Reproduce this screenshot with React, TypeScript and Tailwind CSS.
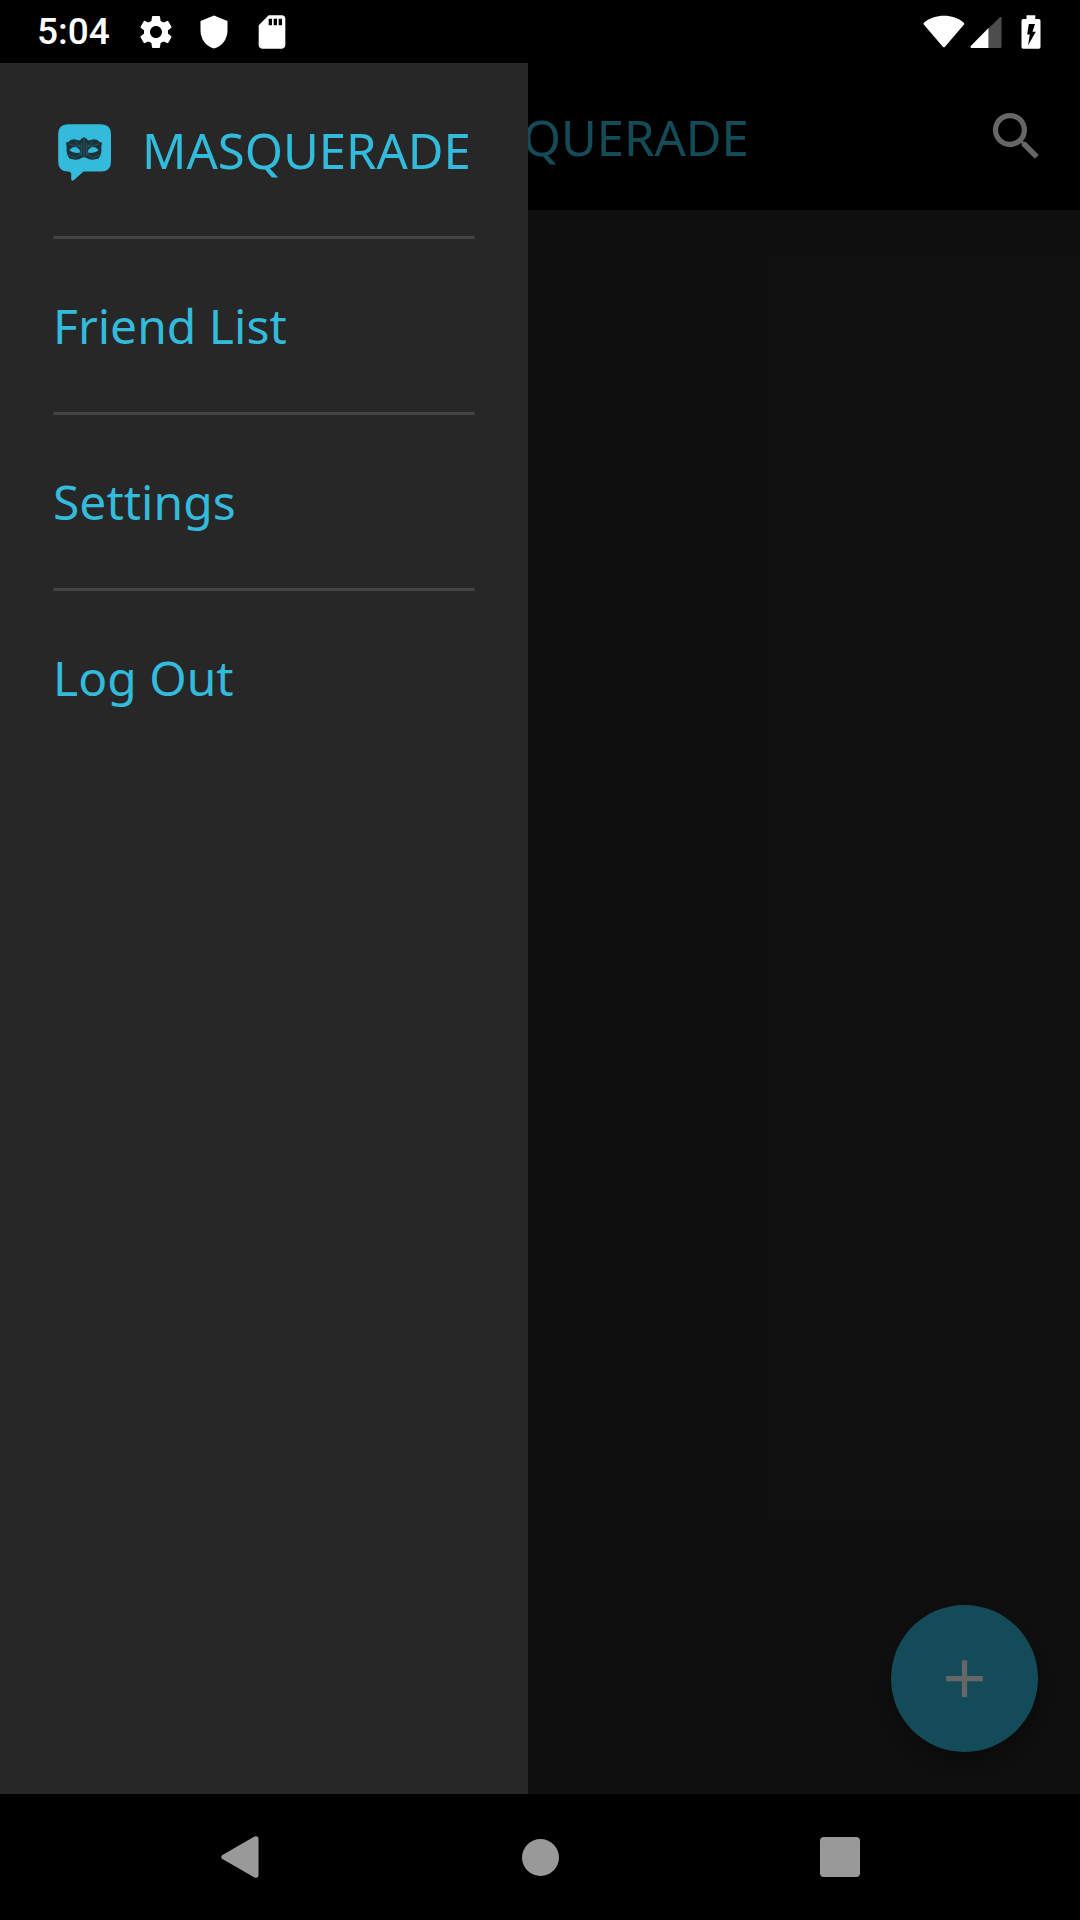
import type { ReactNode } from 'react';
import { MdAdd, MdSdCard, MdSearch, MdSettings } from 'react-icons/md';

const MENU_ITEMS = ['Friend List', 'Settings', 'Log Out'];

function ShieldIcon() {
  return (
    <svg viewBox="0 0 28 34" className="h-[34px] w-8" fill="currentColor" aria-hidden="true">
      <path d="M14 0.5 L27.5 6 V15.5 C27.5 24 22 31.500 14 33.500 C6 31.500 0.500 24 0.500 15.500 V6 Z" />
    </svg>
  );
}

function WifiIcon() {
  return (
    <svg viewBox="0 0 42 34" className="h-[34px] w-[42px]" fill="currentColor" aria-hidden="true">
      <path d="M1.100 7.500 C6.500 3.200 13.500 0.800 21 0.800 C28.500 0.800 35.500 3.200 40.600 7.500 C41.400 8.200 41.400 9 40.800 9.700 L22 31.800 C21.400 32.500 20.400 32.500 19.800 31.800 L1 9.700 C0.400 9 0.400 8.100 1.100 7.500 Z" />
    </svg>
  );
}

function SignalIcon() {
  return (
    <svg viewBox="0 0 32 34" className="h-[34px] w-8" fill="currentColor" aria-hidden="true">
      <path d="M18.500 13.500 L29.800 2.200 Q31.500 1 31.500 3 V31.500 Q31.500 33 30 33 H18.500 Z" fill="#4d4d4d" />
      <path d="M18.500 13 V33 H1.600 Q-0.200 32.500 1 30.700 Z" />
    </svg>
  );
}

function BatteryIcon() {
  return (
    <svg viewBox="0 0 20 34" className="h-[34px] w-5" fill="currentColor" aria-hidden="true">
      <path
        fillRule="evenodd"
        d="M5.500 0.300 H14.300 V4 H17.800 Q19.500 4 19.500 5.700 V32 Q19.500 33.700 17.800 33.700 H2.200 Q0.500 33.700 0.500 32 V5.700 Q0.500 4 2.200 4 H5.500 Z M7.800 9 L6.200 19.500 H8.800 L7 30.500 L14.800 16.800 H11.500 L14 9 Z"
      />
    </svg>
  );
}

function LogoIcon() {
  return (
    <svg viewBox="0 -1 63 63" className="size-[63px] shrink-0" aria-hidden="true">
      <path
        d="M15 5.200 H48 Q58 5.200 58 15.200 V42.500 Q58 52.500 48 52.500 H30.500 L21 61 Q18.200 63 18.200 60 V55 Q18 52.500 15 52.500 Q5.200 52.500 5.200 42.500 V15.200 Q5.200 5.200 15 5.200 Z"
        fill="#33bbdc"
      />
      <path
        d="M13 23.500 L15.500 23 Q17 20.500 21 20.300 L27 21.500 L28.500 19.500 L30 19 L31 18 L32 19 L33.500 19.500 L35 21.500 L41 20.300 Q45 20.500 46.500 23 L49 23.500 L48.300 28 Q49 35.500 45.500 39.500 Q40 41.500 35.500 40 Q33 38.300 31 38.300 Q29 38.300 26.500 40 Q22 41.500 16.500 39.500 Q13 35.500 13.700 28 Z"
        fill="#1d3138"
      />
      <path
        d="M31 20 V38.300 M28.500 24 V37 M33.500 24 V37 M16 25 L27.500 28 L22 21.500 M46 25 L34.500 28 L40 21.500 M15 35.500 L22 39 L28 34.500 M47 35.500 L40 39 L34 34.500"
        fill="none"
        stroke="#2a7f95"
        strokeWidth="0.5"
      />
      <path
        d="M16.300 31.500 Q18.500 28 22 28 Q26.500 28.500 27.500 33.500 Q21.500 35 16.300 31.500 Z M45.700 31.500 Q43.500 28 40 28 Q35.500 28.500 34.500 33.500 Q40.500 35 45.700 31.500 Z"
        fill="#33bbdc"
      />
    </svg>
  );
}

function NavButton({ label, children }: { label: string; children: ReactNode }) {
  return (
    <button type="button" aria-label={label} className="flex items-center justify-center">
      {children}
    </button>
  );
}

export default function App() {
  return (
    <div className="flex min-h-screen flex-col bg-black font-['Noto_Sans',sans-serif]">
      <header className="flex h-[63px] shrink-0 items-center justify-between pr-[39px] pl-[37px] text-white">
        <div className="flex items-center gap-[26px]">
          <time className="mr-1 font-['Roboto',sans-serif] text-[37px] leading-[44px] font-medium">5:04</time>
          <div className="flex w-8 justify-center">
            <MdSettings className="size-10 shrink-0" />
          </div>
          <ShieldIcon />
          <div className="flex w-8 justify-center">
            <MdSdCard className="size-10 shrink-0" />
          </div>
        </div>
        <div className="flex items-center">
          <WifiIcon />
          <div className="ml-[5px] flex">
            <SignalIcon />
          </div>
          <div className="ml-[19px] flex">
            <BatteryIcon />
          </div>
        </div>
      </header>

      <div className="relative flex flex-1 flex-col bg-[#272727]">
        <div className="flex h-[147px] shrink-0 items-center justify-between bg-black pr-8 pl-[420px]">
          <h1 className="text-[49px] leading-[66px] text-[#33bbdc]">MASQUERADE</h1>
          <button type="button" aria-label="Search" className="text-white">
            <MdSearch className="size-[63px]" />
          </button>
        </div>
        <main className="flex flex-1 items-end justify-end p-[42px]">
          <button
            type="button"
            aria-label="Add"
            className="flex size-[147px] items-center justify-center rounded-full bg-[#33bbdc] text-white shadow-[0_12px_24px_rgba(0,0,0,0.35)]"
          >
            <MdAdd className="size-[63px]" />
          </button>
        </main>

        <div className="absolute inset-0 bg-black/60" />

        <aside className="absolute inset-y-0 left-0 w-[528px] max-w-full bg-[#272727] px-[53px] text-[#33bbdc]">
          <div className="flex h-[173px] items-center gap-[26px]">
            <LogoIcon />
            <span className="text-[49px] leading-[66px]">MASQUERADE</span>
          </div>
          <nav>
            {MENU_ITEMS.map((item) => (
              <a
                key={item}
                href="#"
                className="flex h-[176px] items-center border-t-[3px] border-[#424242] text-5xl leading-[66px]"
              >
                {item}
              </a>
            ))}
          </nav>
        </aside>
      </div>

      <footer className="h-[126px] shrink-0">
        <div className="mx-auto grid h-full w-5/6 grid-cols-3 text-[#999999]">
          <NavButton label="Back">
            <svg viewBox="0 0 38 42" className="h-[42px] w-[38px]" fill="currentColor" aria-hidden="true">
              <path d="M1 19.200 L33.500 0.600 Q37.500 -0.500 37.500 3 V39 Q37.500 42.500 33.500 41.400 L1 22.800 Q-0.500 21 1 19.200 Z" />
            </svg>
          </NavButton>
          <NavButton label="Home">
            <span className="size-[37px] rounded-full bg-current" />
          </NavButton>
          <NavButton label="Recent apps">
            <span className="size-10 rounded-sm bg-current" />
          </NavButton>
        </div>
      </footer>
    </div>
  );
}
